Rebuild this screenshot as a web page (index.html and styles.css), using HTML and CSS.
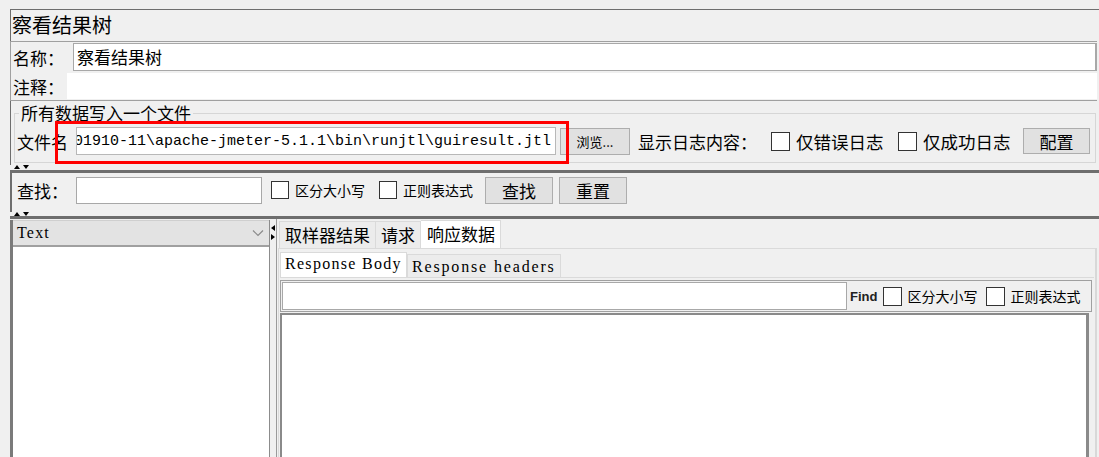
FILE: index.html
```html
<!DOCTYPE html>
<html lang="zh">
<head>
<meta charset="utf-8">
<title>察看结果树</title>
<link rel="stylesheet" href="styles.css">
</head>
<body>
<div class="frame">
  <section class="top">
    <div class="title">察看结果树</div>
    <div class="namebox">
      <div class="row name-row">
        <span class="lbl">名称：</span>
        <div class="field">察看结果树</div>
      </div>
      <div class="row note-row">
        <span class="lbl">注释：</span>
        <div class="field plain"></div>
      </div>
    </div>
    <fieldset class="group">
      <legend>所有数据写入一个文件</legend>
      <div class="file-row">
        <span class="lbl2">文件名</span>
        <div class="path"><span>D:\jmeter201910-11\apache-jmeter-5.1.1\bin\runjtl\guiresult.jtl</span></div>
        <div class="redbox"></div>
        <button class="btn small">浏览...</button>
        <span class="lbl3">显示日志内容：</span>
        <span class="cb"></span><span class="cbl">仅错误日志</span>
        <span class="cb"></span><span class="cbl">仅成功日志</span>
        <button class="btn cfg">配置</button>
      </div>
    </fieldset>
  </section>

  <div class="divider"><svg width="16" height="5" viewBox="0 0 16 5"><path d="M0 4 L3 0 L6 4 Z M9 0 L15 0 L12 4 Z" fill="#000"/></svg></div>

  <section class="search">
    <span class="lbl4">查找：</span>
    <div class="sinput"></div>
    <span class="cb s"></span><span class="cbl sm">区分大小写</span>
    <span class="cb s"></span><span class="cbl sm">正则表达式</span>
    <button class="btn sbtn">查找</button>
    <button class="btn sbtn">重置</button>
  </section>

  <div class="divider d2"><svg width="16" height="5" viewBox="0 0 16 5"><path d="M0 4 L3 0 L6 4 Z M9 0 L15 0 L12 4 Z" fill="#000"/></svg></div>

  <section class="lower">
    <div class="left">
      <div class="combo"><span>Text</span><svg class="chev" width="12" height="8" viewBox="0 0 12 8"><path d="M1 1.5 L6 6.5 L11 1.5" fill="none" stroke="#8a8a8a" stroke-width="1.2"/></svg></div>
      <div class="list"></div>
    </div>
    <div class="vdiv"><svg width="5" height="16" viewBox="0 0 5 16"><path d="M4 0 L0 3 L4 6 Z M0 9 L4 12 L0 15 Z" fill="#000"/></svg></div>
    <div class="right">
      <div class="tabs">
        <span class="tab">取样器结果</span><span class="tab">请求</span><span class="tab sel">响应数据</span>
      </div>
      <div class="tabbody">
        <div class="itabs">
          <span class="itab sel">Response Body</span><span class="itab wide">Response headers</span>
        </div>
        <div class="ibody">
          <div class="findrow">
            <div class="finput"></div>
            <span class="find">Find</span>
            <span class="cb f"></span><span class="cbl fs">区分大小写</span>
            <span class="cb f"></span><span class="cbl fs">正则表达式</span>
          </div>
          <div class="textarea"></div>
        </div>
      </div>
    </div>
  </section>
</div>
</body>
</html>
```

FILE: styles.css
```css
* { box-sizing: border-box; }
html, body { margin: 0; padding: 0; }
body {
  width: 1099px;
  height: 457px;
  overflow: hidden;
  background: #f0f0f0;
  font-family: "Noto Sans CJK SC", "Liberation Sans", sans-serif;
  color: #000;
  white-space: nowrap;
}
.frame { margin: 9px 0 0 10px; width: 1089px; }

/* top section */
.top {
  border-top: 1px solid #6e6e6e;
  border-left: 1px solid #6e6e6e;
  height: 156px;
}
.title {
  height: 31px;
  font-size: 20px;
  line-height: 30px;
  padding-left: 1px;
}
.namebox {
  width: 1087px;
  border: 1px solid #a0a0a0;
  border-right: none;
  margin-left: -1px;
  padding: 0 0 0 2px;
}
.row { display: flex; align-items: center; }
.name-row { height: 30px; }
.note-row { height: 28px; }
.lbl { font-size: 17px; width: 60px; flex: none; }
.name-row .field {
  flex: 1;
  height: 28px;
  background: #fff;
  border: 1px solid #a8a8a8;
  border-right-width: 2px;
  font-size: 17px;
  line-height: 26px;
  padding-left: 3px;
}
.note-row .lbl { width: 54px; }
.note-row .field {
  flex: 1;
  height: 26px;
  background: #fff;
}
.group {
  margin: 2px 3px 0 3px;
  padding: 0 0 2px 2px;
  border: 1px solid #d6d6d6;
  height: 60px;
  min-width: 0;
}
.group legend {
  font-size: 17px;
  line-height: 20px;
  padding: 0 2px;
  margin-left: 2px;
}
.file-row {
  position: relative;
  display: flex;
  align-items: center;
  height: 30px;
  margin-top: 3px;
}
.file-row > * { flex: none; }
.lbl2 { font-size: 17px; width: 59px; }
.path {
  width: 480px;
  height: 28px;
  background: #fff;
  border: 1px solid #b8b8b8;
  display: flex;
  justify-content: flex-end;
  align-items: center;
  overflow: hidden;
  font-family: "Liberation Mono", monospace;
  font-size: 15px;
  padding-right: 4px;
}
.redbox {
  position: absolute;
  left: 38px;
  top: -5px;
  width: 514px;
  height: 43px;
  border: 3px solid #ff0000;
  pointer-events: none;
}
.btn {
  font-family: "Noto Sans CJK SC", sans-serif;
  background: #e1e1e1;
  border: 1px solid #adadad;
  color: #000;
  padding: 0;
  flex: none;
}
.btn.small {
  margin-left: 4px;
  width: 70px;
  height: 27px;
  font-size: 13px;
}
.lbl3 { font-size: 17px; margin-left: 8px; width: 124px; }
.cb {
  display: inline-block;
  width: 19px;
  height: 19px;
  background: #fff;
  border: 1px solid #333;
  margin-left: 13px;
}
.lbl3 + .cb { margin-left: 9px; }
.cbl { font-size: 17.5px; margin-left: 6px; width: 89px; }
.btn.cfg {
  margin-left: 11px;
  width: 67px;
  height: 26px;
  font-size: 17px;
}

/* dividers */
.divider {
  height: 8px;
  border-bottom: 3px solid #6e6e6e;
  padding-left: 4px;
  line-height: 0;
}
.divider svg { display: block; }

/* search */
.search {
  height: 39px;
  border-left: 2px solid #6e6e6e;
  display: flex;
  align-items: center;
  padding-left: 5px;
  padding-bottom: 5px;
}
.search > * { flex: none; }
.lbl4 { font-size: 17px; width: 59px; }
.sinput {
  width: 186px;
  height: 27px;
  background: #fff;
  border: 1px solid #a8a8a8;
}
.cb.s { width: 18px; height: 18px; margin-left: 9px; }
.cbl.sm { font-size: 14px; width: auto; }
.cb.s + .cbl.sm { margin-left: 6px; }
.cbl.sm + .cb.s { margin-left: 14px; }
.btn.sbtn {
  width: 68px;
  height: 27px;
  font-size: 17px;
  margin-left: 12px;
}
.btn.sbtn + .btn.sbtn { margin-left: 6px; }
.divider.d2 { height: 7px; }

/* lower */
.lower {
  display: flex;
  height: 245px;
}
.left {
  width: 260px;
  flex: none;
  border-left: 3px solid #7a7a7a;
  border-right: 1px solid #8c8c8c;
  display: flex;
  flex-direction: column;
  margin-top: 1px;
}
.combo {
  height: 27px;
  background: #e3e3e3;
  border-bottom: 2px solid #a0a0a0;
  border-top: 1px solid #cfcfcf;
  display: flex;
  align-items: center;
  justify-content: space-between;
  padding: 0 5px 0 4px;
  font-family: "Liberation Serif", serif;
  font-size: 16px;
  letter-spacing: 1.2px;
}
.list { flex: 1; background: #fff; }
.vdiv {
  width: 7px;
  flex: none;
  padding: 6px 0 0 1px;
  border-right: 1px solid #9a9a9a;
  line-height: 0;
}
.vdiv svg { display: block; }
.right {
  flex: 1;
  display: flex;
  flex-direction: column;
  padding-top: 1px;
  padding-left: 1px;
}
.tabs { display: flex; align-items: flex-end; height: 28px; padding-left: 1px; }
.tab {
  height: 27px;
  font-size: 17px;
  line-height: 25px;
  padding: 0 5px;
  background: #ececec;
  border: 1px solid #dadada;
  border-bottom: none;
}
.tab + .tab { border-left: none; }
.tab.sel { background: #fff; height: 28px; padding: 0 5px 0 6px; }
.tabbody {
  flex: 1;
  border: 1px solid #dadada;
  border-right: 2px solid #d8d8d8;
  background: #f0f0f0;
  padding: 3px 1px 0 1px;
  display: flex;
  flex-direction: column;
  width: 819px;
}
.itabs { display: flex; height: 25px; align-items: flex-end; }
.itab {
  height: 23px;
  font-family: "Liberation Serif", serif;
  font-size: 16px;
  letter-spacing: 1.3px;
  line-height: 23px;
  padding: 0 4px;
  background: #ececec;
  border: 1px solid #dadada;
  border-bottom: none;
}
.itab.wide { letter-spacing: 1.85px; }
.itab.sel { background: #fff; height: 25px; line-height: 22px; }
.ibody {
  flex: 1;
  border-top: 1px solid #dadada;
  padding-top: 2px;
  display: flex;
  flex-direction: column;
}
.findrow {
  height: 32px;
  display: flex;
  align-items: center;
  border: 1px solid #a0a0a0;
  margin-right: 2px;
  padding-left: 1px;
}
.findrow > * { flex: none; }
.finput {
  width: 565px;
  height: 28px;
  background: #fff;
  border: 1px solid #a8a8a8;
}
.find {
  font-family: "Liberation Sans", sans-serif;
  font-weight: bold;
  font-size: 13px;
  margin-left: 3px;
  color: #222;
}
.cb.f { width: 19px; height: 19px; margin-left: 6px; }
.cbl.fs { font-size: 14px; margin-left: 5px; width: auto; }
.cbl.fs + .cb.f { margin-left: 9px; }
.textarea {
  flex: 1;
  background: #fff;
  border-left: 2px solid #8a8a8a;
  border-right: 3px solid #8a8a8a;
  border-top: 2px solid #8a8a8a;
  margin-top: 1px;
  margin-right: 5px;
}
```
